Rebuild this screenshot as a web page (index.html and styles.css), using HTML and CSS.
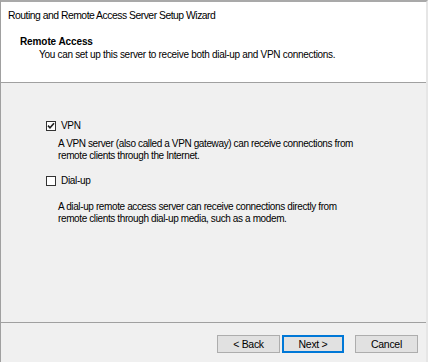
FILE: index.html
```html
<!DOCTYPE html>
<html lang="en">
<head>
    <meta charset="UTF-8">
    <title>Routing and Remote Access Server Setup Wizard</title>
    <link rel="stylesheet" href="styles.css">
</head>
<body>
    <div class="wizard">
        <div class="header">
            <div class="title">Routing and Remote Access Server Setup Wizard</div>
            <div class="page-title">Remote Access</div>
            <div class="page-subtitle">You can set up this server to receive both dial-up and VPN connections.</div>
        </div>
        <div class="content">
            <label class="option">
                <span class="checkbox">
                    <svg width="8" height="8" viewBox="0 0 8 8"><path d="M1 3.6 L3 5.8 L7 1.2" fill="none" stroke="#222" stroke-width="1.6"/></svg>
                </span>
                <span>VPN</span>
            </label>
            <p class="desc">A VPN server (also called a VPN gateway) can receive connections from<br>remote clients through the Internet.</p>
            <label class="option dial">
                <span class="checkbox"></span>
                <span>Dial-up</span>
            </label>
            <p class="desc dial-desc">A dial-up remote access server can receive connections directly from<br>remote clients through dial-up media, such as a modem.</p>
        </div>
        <div class="footer">
            <button class="btn">&lt; Back</button>
            <button class="btn default">Next &gt;</button>
            <button class="btn cancel">Cancel</button>
        </div>
    </div>
</body>
</html>
```

FILE: styles.css
```css
body {
    margin: 0;
    font-family: "Liberation Sans", Arial, sans-serif;
    font-size: 10px;
    letter-spacing: -0.3px;
    color: #000;
    background-color: #f0f0f0;
}
.wizard {
    width: 428px;
    height: 362px;
    box-sizing: border-box;
    border-top: 2px solid #a9a9a9;
    border-left: 1px solid #a0a0a0;
    border-right: 2px solid #e6e6e6;
    display: flex;
    flex-direction: column;
}
.header {
    background-color: white;
    height: 81px;
    box-sizing: border-box;
    border-bottom: 1px solid #a0a0a0;
    padding: 7px 0 0 7px;
}
.title {
    font-size: 10.4px;
    letter-spacing: -0.5px;
    line-height: 13px;
}
.page-title {
    font-weight: bold;
    margin: 14px 0 0 12px;
    line-height: 12px;
    letter-spacing: -0.1px;
}
.page-subtitle {
    margin: 1px 0 0 31px;
    line-height: 12px;
}
.content {
    flex: 1;
    padding: 37px 0 0 45px;
    border-bottom: 1px solid #a0a0a0;
}
.option {
    display: flex;
    align-items: center;
    gap: 5px;
    line-height: 12px;
    height: 12px;
}
.checkbox {
    width: 8px;
    height: 8px;
    border: 1px solid #333;
    background-color: white;
    display: flex;
}
.desc {
    margin: 6px 0 0 12px;
    line-height: 12px;
    letter-spacing: -0.38px;
}
.dial {
    margin-top: 13px;
}
.dial-desc {
    margin-top: 14px;
}
.footer {
    height: 39px;
    display: flex;
    justify-content: flex-end;
    align-items: flex-start;
    padding: 12px 8px 0 0;
    box-sizing: border-box;
}
.btn {
    width: 63px;
    height: 18px;
    font-family: "Liberation Sans", Arial, sans-serif;
    font-size: 10.5px;
    letter-spacing: -0.3px;
    background-color: #e1e1e1;
    border: 1px solid #adadad;
    margin-left: 2px;
    padding: 0;
}
.btn.default {
    border: 2px solid #0078d7;
    width: 62px;
}
.btn.cancel {
    margin-left: 11px;
}
```
